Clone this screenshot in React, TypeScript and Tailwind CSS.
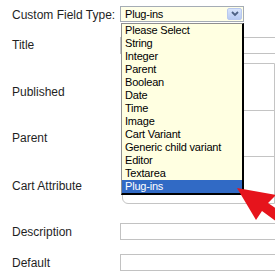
import React from "react";

const items = [
  "Please Select",
  "String",
  "Integer",
  "Parent",
  "Boolean",
  "Date",
  "Time",
  "Image",
  "Cart Variant",
  "Generic child variant",
  "Editor",
  "Textarea",
  "Plug-ins",
];

export default function App() {
  return (
    <div className="relative w-[275px] h-[275px] overflow-hidden bg-white font-['Liberation_Sans',Arial,sans-serif] text-[12px] leading-[14px] text-[#1f1f1f]">
      {/* Row: Custom Field Type */}
      <div className="flex h-[30px]">
        <div className="w-[120px] shrink-0 pl-[12px] pt-[8px] whitespace-nowrap">Custom Field Type:</div>
        <div className="relative pt-[6px]">
          <div className="relative flex items-center w-[124px] h-[16px] border border-[#a5acb5] bg-[#ffffe8] text-[11px] font-['Liberation_Sans',Tahoma,sans-serif] text-black pl-[4px]">
            <span className="tracking-[-0.2px]">Plug-ins</span>
            <div className="absolute right-[1px] top-[1px] w-[15px] h-[12px] rounded-[2px] border border-[#b9c9ef] bg-gradient-to-b from-[#d8e4fb] to-[#b7caf3] flex items-center justify-center">
              <svg width="8" height="6" viewBox="0 0 8 6">
                <path d="M1 1 L4 4 L7 1" fill="none" stroke="#4d6185" strokeWidth="1.8" />
              </svg>
            </div>
          </div>
          {/* dropdown list */}
          <div className="absolute z-20 left-[1px] top-[23px] w-[123px] border-l border-t border-[#8f8f8f] border-r-2 border-r-black border-b-2 border-b-black bg-[#ffffe1] font-['Liberation_Sans',Tahoma,sans-serif] text-[11px] text-black">
            {items.map((it) => (
              <div
                key={it}
                className={
                  it === "Plug-ins"
                    ? "h-[13px] leading-[13px] pl-[3px] bg-[#316ac5] text-white tracking-[-0.2px] whitespace-nowrap"
                    : "h-[13px] leading-[13px] pl-[3px] tracking-[-0.2px] whitespace-nowrap"
                }
              >
                {it}
              </div>
            ))}
          </div>
        </div>
      </div>

      {/* Row: Title */}
      <div className="flex h-[33px]">
        <div className="w-[120px] shrink-0 pl-[12px] pt-[8px]">Title</div>
        <div className="pt-[7px]">
          <div className="w-[200px] h-[17px] border border-[#c2c2c2]" />
        </div>
      </div>

      {/* Boxed rows */}
      <div className="flex">
        <div className="w-[122px] shrink-0 pl-[12px]">
          <div className="h-[48px] pt-[22px]">Published</div>
          <div className="h-[46px] pt-[20px]">Parent</div>
          <div className="h-[47px] pt-[22px]">Cart Attribute</div>
        </div>
        <div className="w-[200px] border border-[#c4c4c4] rounded-l-[6px]">
          <div className="h-[47px] border-b border-[#c4c4c4]" />
          <div className="h-[46px] border-b border-[#c4c4c4]" />
          <div className="h-[45px]" />
        </div>
      </div>

      {/* Description */}
      <div className="flex h-[50px]">
        <div className="w-[120px] shrink-0 pl-[12px] pt-[21px]">Description</div>
        <div className="pt-[19px]">
          <div className="w-[200px] h-[17px] border border-[#c2c2c2]" />
        </div>
      </div>

      {/* Default */}
      <div className="flex">
        <div className="w-[120px] shrink-0 pl-[12px] pt-[2px]">Default</div>
        <div className="pt-0">
          <div className="w-[200px] h-[17px] border border-[#c2c2c2]" />
        </div>
      </div>

      {/* red arrow */}
      <svg className="absolute left-0 top-0 z-30 pointer-events-none" width="275" height="275" viewBox="0 0 275 275">
        <polygon
          points="237,188 276,195 268,203 292,219 285,228 262,211 256,220"
          fill="#e6141c"
        />
      </svg>
    </div>
  );
}
